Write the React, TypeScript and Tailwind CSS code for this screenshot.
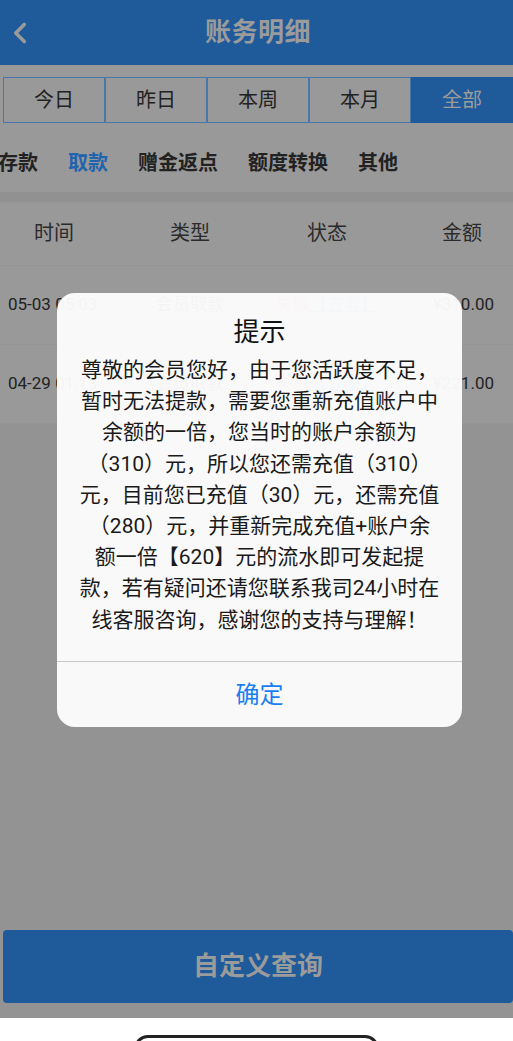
import { ChevronLeft } from 'lucide-react';

const tabs = ['今日', '昨日', '本周', '本月', '全部'];
const cats = ['存款', '取款', '赠金返点', '额度转换', '其他'];

const rows = [
  { time: '05-03 05:03', amount: '¥310.00' },
  { time: '04-29 01:13', amount: '¥221.00' },
];

const message = [
  '尊敬的会员您好，由于您活跃度不足，',
  '暂时无法提款，需要您重新充值账户中',
  '余额的一倍，您当时的账户余额为',
  '（310）元，所以您还需充值（310）',
  '元，目前您已充值（30）元，还需充值',
  '（280）元，并重新完成充值+账户余',
  '额一倍【620】元的流水即可发起提',
  '款，若有疑问还请您联系我司24小时在',
  '线客服咨询，感谢您的支持与理解！',
];

export default function App() {
  return (
    <div className="relative w-[513px] h-[1041px] overflow-hidden bg-white font-['Roboto','Noto_Sans_CJK_SC',sans-serif]">
      <div className="flex flex-col h-[1018px] bg-[#939393]">
        {/* Header */}
        <header className="relative flex items-center justify-center h-[65px] bg-[#1f5a9a] shrink-0">
          <ChevronLeft className="absolute left-[3px] top-[16px] w-[34px] h-[34px] text-[#9a9a9a]" strokeWidth={2.6} />
          <h1 className="text-[26px] font-bold text-[#9b9b9b] tracking-[0.5px] pl-[3px]">账务明细</h1>
        </header>

        {/* Date tabs */}
        <div className="bg-[#999] pt-3">
          <div className="grid grid-cols-5 h-[46px] ml-[3px]">
            {tabs.map((t, i) => (
              <div
                key={t}
                className={
                  i === 4
                    ? 'flex items-center justify-center border border-[#1f5a9a] bg-[#1f5a9a] text-[20px] text-[#9c9c9c]'
                    : 'flex items-center justify-center border border-[#4a77ab] text-[20px] text-[#222]'
                }
              >
                {t}
              </div>
            ))}
          </div>

          {/* Categories */}
          <div className="flex items-center gap-[30px] h-[69px] pt-[11px] ml-[-2px] whitespace-nowrap">
            {cats.map((c, i) => (
              <span
                key={c}
                className={i === 1 ? 'text-[20px] font-bold text-[#1f64ae]' : 'text-[20px] font-bold text-[#222]'}
              >
                {c}
              </span>
            ))}
          </div>
        </div>

        <div className="h-[10px] bg-[#919191]" />

        {/* Table */}
        <div className="bg-[#999]">
          <div className="flex items-center h-[64px] pb-[2px] text-[20px] text-[#2a2a2a] border-b border-[#959595]">
            <div className="w-[108px] text-center">时间</div>
            <div className="w-[164px] text-center">类型</div>
            <div className="w-[110px] text-center">状态</div>
            <div className="flex-1 text-right pr-[31px]">金额</div>
          </div>
          {rows.map((r) => (
            <div key={r.time} className="flex items-center h-[79px] text-[17px] text-[#222] border-b border-[#949494]">
              <div className="w-[122px] pl-2 whitespace-nowrap">{r.time}</div>
              <div className="w-[136px] text-center">会员取款</div>
              <div className="w-[138px] text-center whitespace-nowrap">
                <span className="text-[#b33a3a]">失败</span>
                <span className="text-[#2a6bb0] underline">【查看】</span>
              </div>
              <div className="flex-1 text-right pr-[19px]">{r.amount}</div>
            </div>
          ))}
        </div>

        {/* Bottom button */}
        <div className="mt-auto pl-[3px] pb-[15px]">
          <button className="w-full h-[73px] rounded-[4px] bg-[#1f5a9a] text-[26px] font-bold text-[#9b9b9b]">
            自定义查询
          </button>
        </div>
      </div>

      {/* Home indicator */}
      <div className="absolute left-[134px] top-[1035px] w-[245px] h-[30px] rounded-[14px] border-[3px] border-[#222]" />

      {/* Dialog */}
      <div className="absolute left-[57px] top-[293px] w-[405px] h-[434px] rounded-[18px] bg-[#fdfdfd]/[0.96] flex flex-col">
        <div className="pt-5 text-center text-[26px] leading-[39px] text-[#111]">提示</div>
        <div className="mt-[3px] px-4 text-center text-[21px] leading-[31.2px] text-[#1a1a1a]">
          {message.map((line) => (
            <span key={line} className="block whitespace-nowrap">
              {line}
            </span>
          ))}
        </div>
        <div className="mt-auto border-t border-[#c8c8c8] h-[66px] flex items-center justify-center">
          <span className="text-[24px] text-[#1a7ef2]">确定</span>
        </div>
      </div>
    </div>
  );
}
